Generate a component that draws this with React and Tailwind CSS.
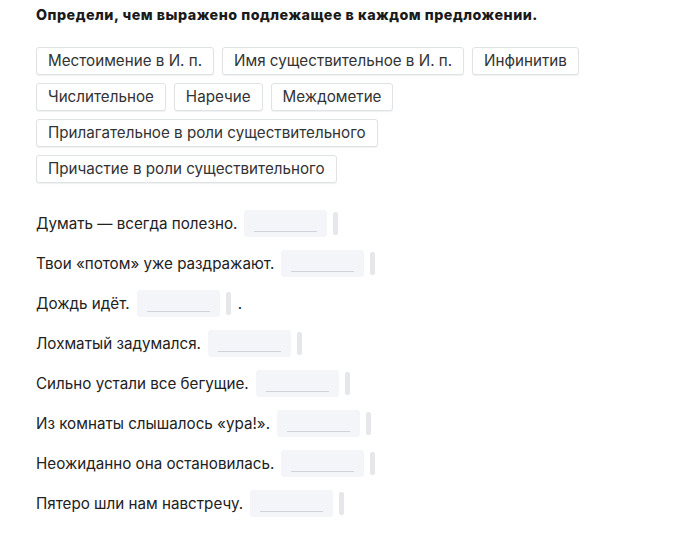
import React from "react";

const chips = [
  "Местоимение в И. п.",
  "Имя существительное в И. п.",
  "Инфинитив",
  "Числительное",
  "Наречие",
  "Междометие",
  "Прилагательное в роли существительного",
  "Причастие в роли существительного",
];

const sentences = [
  ["Думать — всегда полезно.", ""],
  ["Твои «потом» уже раздражают.", ""],
  ["Дождь идёт.", "."],
  ["Лохматый задумался.", ""],
  ["Сильно устали все бегущие.", ""],
  ["Из комнаты слышалось «ура!».", ""],
  ["Неожиданно она остановилась.", ""],
  ["Пятеро шли нам навстречу.", ""],
];

export default function App() {
  return (
    <div
      className="min-h-[535px] bg-white pl-[36px] pt-[6px] text-[#222]"
      style={{ fontFamily: "Inter, 'Noto Sans', sans-serif" }}
    >
      <div className="text-[14.3px] font-extrabold leading-[18px] tracking-[0.5px] text-[#1a1a1a]">
        Определи, чем выражено подлежащее в каждом предложении.
      </div>
      <div className="mt-[23px] flex max-w-[600px] flex-wrap gap-x-2 gap-y-2">
        {chips.map((c) => (
          <div
            key={c}
            className="flex h-[28px] items-center rounded-[3px] border border-[#dfe2e6] bg-white px-[11px] text-[15.2px] text-[#333] shadow-[0_1px_1px_rgba(0,0,0,0.06)]"
          >
            {c}
          </div>
        ))}
      </div>
      <div className="mt-[27px] flex flex-col gap-[13px]">
        {sentences.map(([s, tail]) => (
          <div key={s} className="flex h-[27px] items-center pt-[2px] text-[15.2px] text-[#222]">
            <span>{s}</span>
            <div className="ml-[7px] -mt-[2px] flex h-[27px] w-[83px] items-end justify-center rounded-[3px] bg-[#f3f5f9] pb-[5px]">
              <div className="h-px w-[63px] bg-[#cfd4dc]" />
            </div>
            <div className="ml-[6px] -mt-[2px] h-[23px] w-[5px] rounded-[2px] bg-[#e5e7ea]" />
            {tail && <span className="ml-[7px]">{tail}</span>}
          </div>
        ))}
      </div>
    </div>
  );
}
